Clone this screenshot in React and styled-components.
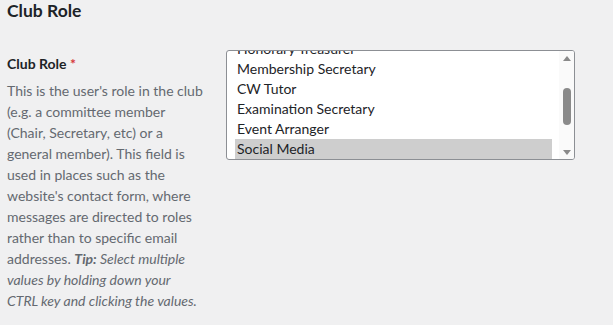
import styled, { createGlobalStyle } from "styled-components";

const GlobalStyle = createGlobalStyle`
  html, body {
    margin: 0;
    padding: 0;
    background: #f0f0f1;
  }
  body {
    font-family: Lato, "Noto Sans", sans-serif;
    color: #1d2327;
  }
`;

const roles = [
  "Chair",
  "Secretary",
  "Honorary Treasurer",
  "Membership Secretary",
  "CW Tutor",
  "Examination Secretary",
  "Event Arranger",
  "Social Media",
];

const selected = ["Social Media"];

const App = () => {
  return (
    <>
      <GlobalStyle />
      <StyledPage>
        <StyledHeading>Club Role</StyledHeading>
        <StyledRow>
          <StyledLabelCell>
            <StyledLabel>
              Club Role <StyledRequired>*</StyledRequired>
            </StyledLabel>
            <StyledDescription>
              This is the user's role in the club (e.g. a committee member
              (Chair, Secretary, etc) or a general member). This field is used
              in places such as the website's contact form, where messages are
              directed to roles rather than to specific email addresses.{" "}
              <em>
                <strong>Tip:</strong> Select multiple values by holding down
                your
                <br />
                CTRL key and clicking the values.
              </em>
            </StyledDescription>
          </StyledLabelCell>
          <StyledFieldCell>
            <StyledListBox>
              <StyledOptions>
                {roles.map((role) => (
                  <StyledOption key={role} $selected={selected.includes(role)}>
                    {role}
                  </StyledOption>
                ))}
              </StyledOptions>
              <StyledScrollbar>
                <svg width="10" height="6" viewBox="0 0 10 6">
                  <path d="M1 6 L5 1 L9 6 Z" fill="#8a8a8a" />
                </svg>
                <StyledTrack>
                  <StyledThumb />
                </StyledTrack>
                <svg width="10" height="6" viewBox="0 0 10 6">
                  <path d="M1 0 L5 5 L9 0 Z" fill="#8a8a8a" />
                </svg>
              </StyledScrollbar>
            </StyledListBox>
          </StyledFieldCell>
        </StyledRow>
      </StyledPage>
    </>
  );
};

const StyledPage = styled.div`
  padding: 0 7px;
`;

const StyledHeading = styled.h2`
  margin: 0;
  font-size: 17.5px;
  font-weight: 700;
  line-height: 22px;
  color: #1d2327;
`;

const StyledRow = styled.div`
  display: flex;
  margin-top: 28px;
`;

const StyledLabelCell = styled.div`
  width: 200px;
  flex-shrink: 0;
  padding-right: 19px;
`;

const StyledLabel = styled.div`
  font-size: 14px;
  font-weight: 700;
  line-height: 20px;
  margin-top: 4px;
`;

const StyledRequired = styled.span`
  color: #d63638;
`;

const StyledDescription = styled.p`
  margin: 6px 0 0;
  font-size: 14px;
  line-height: 21px;
  color: #646970;
  strong {
    font-weight: 700;
  }
`;

const StyledFieldCell = styled.div`
  padding-top: 0;
`;

const StyledListBox = styled.div`
  display: flex;
  width: 347px;
  height: 108px;
  border: 1px solid #8c8f94;
  border-radius: 3px;
  background: #fff;
  overflow: hidden;
`;

const StyledOptions = styled.div`
  flex: 1;
  padding: 0 7px 0 8px;
  margin-top: -52px;
`;

const StyledOption = styled.div`
  height: 20px;
  line-height: 20px;
  padding: 0 2px;
  font-size: 14px;
  color: #1d2327;
  white-space: nowrap;
  background: ${(p) => (p.$selected ? "#cecece" : "transparent")};
`;

const StyledScrollbar = styled.div`
  width: 15px;
  display: flex;
  flex-direction: column;
  align-items: center;
  justify-content: space-between;
  padding: 4px 0 3px;
  background: #fafafa;
`;

const StyledTrack = styled.div`
  flex: 1;
  width: 100%;
  display: flex;
  justify-content: center;
`;

const StyledThumb = styled.div`
  width: 8px;
  height: 37px;
  margin-top: 27px;
  border-radius: 4px;
  background: #8a8a8a;
`;

export default App;
